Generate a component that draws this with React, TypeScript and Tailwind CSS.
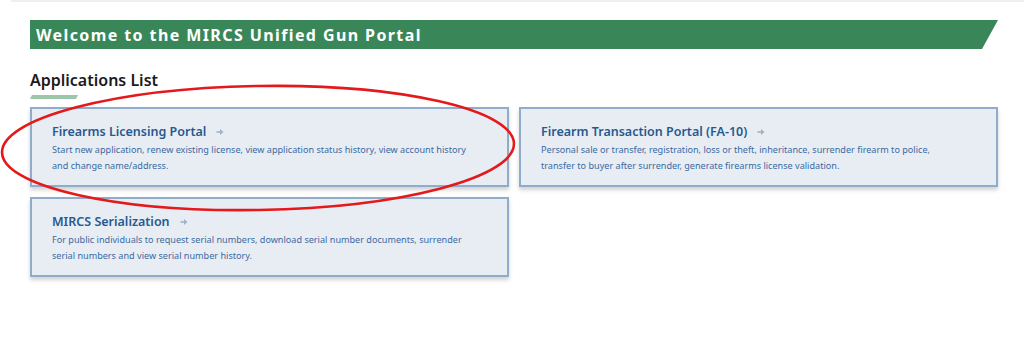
import React from "react";

const apps = [
  {
    title: "Firearms Licensing Portal",
    desc: "Start new application, renew existing license, view application status history, view account history and change name/address.",
  },
  {
    title: "Firearm Transaction Portal (FA-10)",
    desc: "Personal sale or transfer, registration, loss or theft, inheritance, surrender firearm to police, transfer to buyer after surrender, generate firearms license validation.",
  },
  {
    title: "MIRCS Serialization",
    desc: "For public individuals to request serial numbers, download serial number documents, surrender serial numbers and view serial number history.",
  },
];

const Arrow = () => (
  <svg width="8" height="8" viewBox="0 0 8 8" className="ml-[10px] inline-block">
    <path d="M0.5 4h4.5" stroke="#9fb2c8" strokeWidth="1.6" />
    <path d="M4 1l3.5 3L4 7z" fill="#9fb2c8" />
  </svg>
);

export default function App() {
  return (
    <div className="relative w-[1024px] h-[345px] bg-white overflow-hidden font-['Noto_Sans',sans-serif]">
      <div className="ml-[11px] h-[2px] bg-[#efefef]" />

      <div className="px-[30px] pt-[18px]">
        <div className="w-[968px] h-[29px] bg-[#398758] flex items-center pl-[6px] [clip-path:polygon(0_0,100%_0,calc(100%-16px)_100%,0_100%)]">
          <h1 className="text-white text-[16px] font-bold tracking-[1.4px] leading-none">
            Welcome to the MIRCS Unified Gun Portal
          </h1>
        </div>

        <h2 className="mt-[21px] text-[16px] font-semibold text-[#1b1b1b] leading-[20px]">Applications List</h2>
        <div className="mt-[5px] w-[48px] h-[4px] bg-[#9cc6a9] [clip-path:polygon(2px_0,100%_0,calc(100%-2px)_100%,0_100%)]" />

        <div className="mt-[8px] grid grid-cols-2 gap-[10px] w-[968px]">
          {apps.map((a) => (
            <div
              key={a.title}
              className="h-[80px] bg-[#e8edf4] border-2 border-[#8fadcb] shadow-[0_3px_4px_rgba(0,0,0,0.18)] pl-[20px] pr-[12px] pt-[14px]"
            >
              <div className="flex items-center text-[12.5px] font-semibold text-[#27598f] leading-[18px]">
                {a.title}
                <Arrow />
              </div>
              <p className="mt-[1px] max-w-[420px] text-[9.1px] text-[#3a6aa0] leading-[16px]">{a.desc}</p>
            </div>
          ))}
        </div>
      </div>

      <svg className="absolute left-0 top-0 pointer-events-none" width="1024" height="345">
        <ellipse cx="258" cy="148" rx="256" ry="62" fill="none" stroke="#e3191b" strokeWidth="2.6" transform="rotate(-1 258 148)" />
      </svg>
    </div>
  );
}
